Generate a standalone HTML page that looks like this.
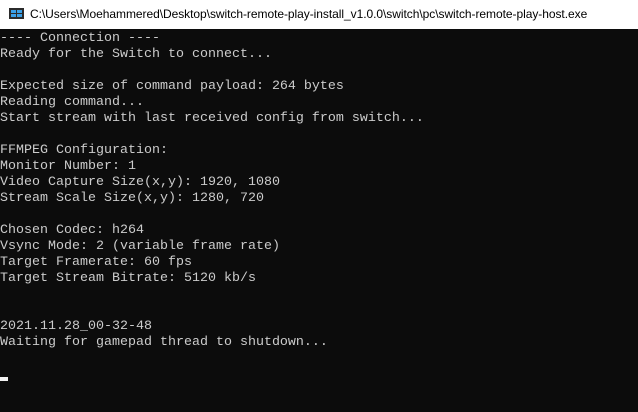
<!DOCTYPE html>
<html><head><style>
html,body{margin:0;padding:0;width:638px;height:412px;overflow:hidden;background:#0c0c0c}
#title{position:absolute;left:0;top:0;width:638px;height:29px;background:#fff}
#title .t{position:absolute;left:30px;top:7px;font:12px "Liberation Sans",sans-serif;color:#000;white-space:nowrap;letter-spacing:-0.05px}
#icon{position:absolute;left:9px;top:8px;width:15px;height:11px;background:#2b2b2b}
#icon i{position:absolute;background:#3aa0e8}
pre{position:absolute;left:0;top:31px;margin:0;font:13.33px/16px "Liberation Mono",monospace;color:#cccccc}
#cur{position:absolute;left:0;top:377px;width:8px;height:4px;background:#f2f2f2}
</style></head><body>
<div id="title"><div id="icon"><i style="left:2px;top:2px;width:5px;height:3px"></i><i style="left:8px;top:2px;width:5px;height:3px"></i><i style="left:2px;top:6px;width:5px;height:3px"></i><i style="left:8px;top:6px;width:5px;height:3px"></i></div><div class="t">C:\Users\Moehammered\Desktop\switch-remote-play-install_v1.0.0\switch\pc\switch-remote-play-host.exe</div></div>
<pre>---- Connection ----
Ready for the Switch to connect...

Expected size of command payload: 264 bytes
Reading command...
Start stream with last received config from switch...

FFMPEG Configuration:
Monitor Number: 1
Video Capture Size(x,y): 1920, 1080
Stream Scale Size(x,y): 1280, 720

Chosen Codec: h264
Vsync Mode: 2 (variable frame rate)
Target Framerate: 60 fps
Target Stream Bitrate: 5120 kb/s


2021.11.28_00-32-48
Waiting for gamepad thread to shutdown...</pre>
<div id="cur"></div>
</body></html>
